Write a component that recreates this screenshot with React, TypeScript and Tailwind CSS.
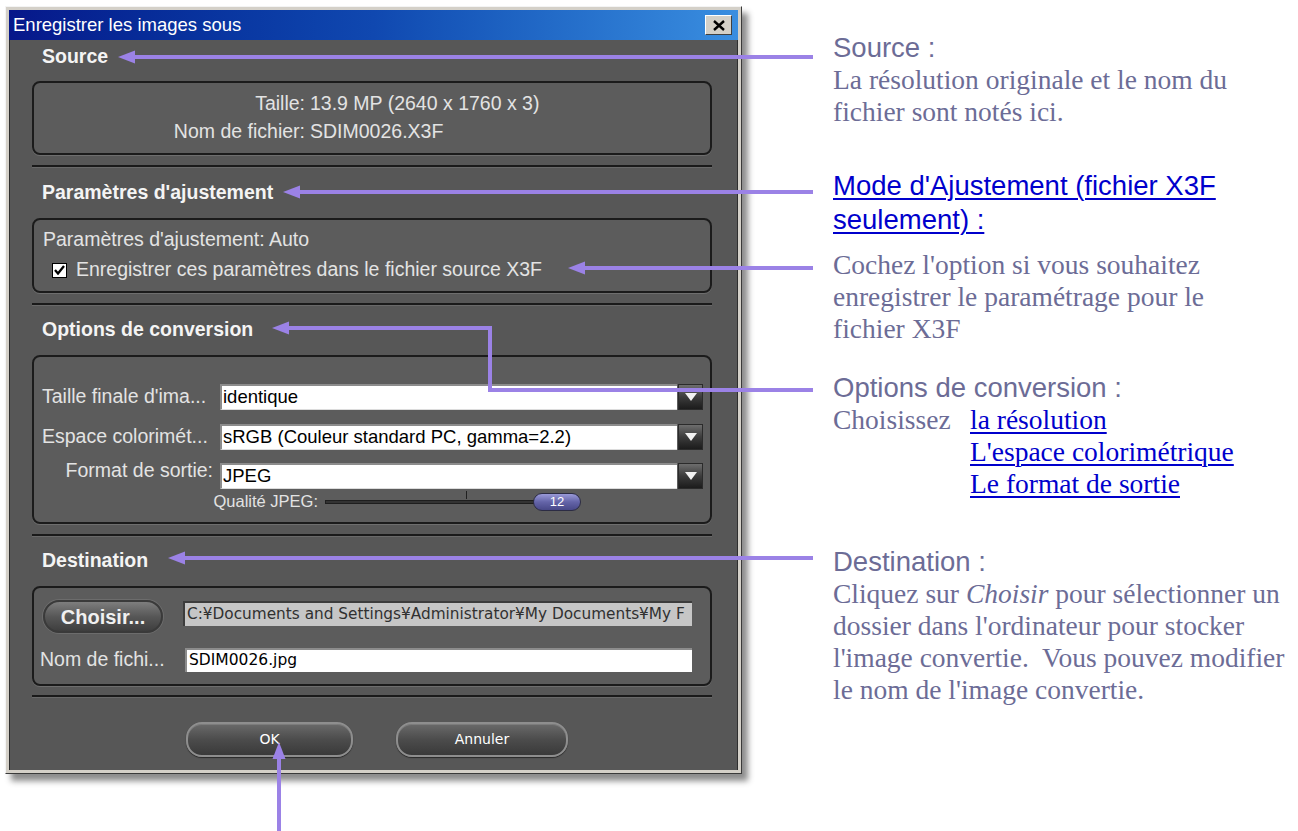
import React from 'react';

const PURPLE = '#9b82e6';

const Header = ({ children, className = '' }: { children: React.ReactNode; className?: string }) => (
    <div className={`flex h-[26px] items-center pl-[10px] text-[19.5px] font-bold text-[#f4f4f4] ${className}`}>
        {children}
    </div>
);

const Box = ({ children, className = '' }: { children: React.ReactNode; className?: string }) => (
    <div className={`rounded-[8px] border-2 border-[#1b1b1b] bg-[#5c5c5c] shadow-[0_1px_0_#6e6e6e] ${className}`}>
        {children}
    </div>
);

const Separator = ({ className = '' }: { className?: string }) => (
    <div className={`h-[3px] border-t-2 border-b border-t-[#1a1a1a] border-b-[#696969] ${className}`} />
);

const Select = ({ value }: { value: string }) => (
    <div className="flex h-[26px] flex-1">
        <div className="flex-1 border-t-2 border-l-2 border-b border-t-[#8c8c8c] border-l-[#8c8c8c] border-b-[#dcdcdc] bg-white pl-[1px] text-[18.5px] leading-[22px] text-black">
            {value}
        </div>
        <div className="ml-px flex w-[25px] items-center justify-center border border-[#2b2b2b] bg-linear-to-b from-[#6e6e6e] via-[#3c3c3c] to-[#1c1c1c]">
            <svg width="12" height="8" viewBox="0 0 12 8">
                <path d="M0 0H12L6 8Z" fill="#f2f2f2" />
            </svg>
        </div>
    </div>
);

const PillButton = ({ label, width }: { label: string; width: string }) => (
    <div className={`flex h-[35px] ${width} items-center justify-center rounded-[16px] border-2 border-[#8e8e8e] bg-linear-to-b from-[#6a6a6a] via-[#4c4c4c] to-[#3a3a3a] shadow-[inset_0_1px_0_#7c7c7c,0_1px_1px_#2a2a2a] font-['DejaVu_Sans',sans-serif] text-[14px] text-white`}>
        {label}
    </div>
);

const SaveDialog = () => (
    <div className="mt-[6px] ml-[5px] w-[737px] border border-t-[#f4f4f4] border-l-[#f4f4f4] border-r-[#3a3a3a] border-b-[#3a3a3a] bg-[#d4d0c8] p-[3px] shadow-[6px_7px_6px_rgba(0,0,0,0.45)] font-['Liberation_Sans',Arial,sans-serif]">
        {/* title bar */}
        <div className="flex h-[30px] items-center justify-between bg-linear-to-r from-[#07178a] via-[#1048b0] to-[#3a8ee0] pl-[4px] pr-[6px]">
            <span className="text-[18.5px] text-white">Enregistrer les images sous</span>
            <div className="flex h-[20px] w-[27px] items-center justify-center border border-t-white border-l-white border-r-[#404040] border-b-[#404040] bg-[#d4d0c8]">
                <svg width="12" height="11" viewBox="0 0 12 11">
                    <path d="M1 1L11 10M11 1L1 10" stroke="#000" strokeWidth="2.4" />
                </svg>
            </div>
        </div>

        <div className="border-l border-r border-l-[#2e2e2e] border-r-[#2e2e2e] bg-[#575757] pt-[4px] pr-[25px] pb-[13px] pl-[22px] text-[19.5px] text-[#e3e3e3]">
            <Header>Source</Header>
            <Box className="mt-[11px] h-[74px] pt-[9px]">
                <div className="grid grid-cols-[271px_1fr] gap-y-[6px] leading-[22px]">
                    <span className="text-right">Taille:</span>
                    <span className="pl-[5px]">13.9 MP (2640 x 1760 x 3)</span>
                    <span className="text-right">Nom de fichier:</span>
                    <span className="pl-[5px]">SDIM0026.X3F</span>
                </div>
            </Box>
            <Separator className="mt-[10px]" />

            <Header className="mt-[12px]">Paramètres d'ajustement</Header>
            <Box className="mt-[12px] h-[75px] pt-[8px]">
                <div className="pl-[9px] leading-[22px]">Paramètres d'ajustement: Auto</div>
                <div className="mt-[9px] flex h-[22px] items-center gap-[9px] pl-[18px]">
                    <div className="flex h-[15px] w-[15px] items-center justify-center border border-black bg-white">
                        <svg width="11" height="10" viewBox="0 0 11 10">
                            <path d="M1 5L4 8.5L10 1" stroke="#000" strokeWidth="2.3" fill="none" />
                        </svg>
                    </div>
                    <span>Enregistrer ces paramètres dans le fichier source X3F</span>
                </div>
            </Box>
            <Separator className="mt-[10px]" />

            <Header className="mt-[11px]">Options de conversion</Header>
            <Box className="mt-[12px] h-[169px] pt-[25px] pr-[7px] pl-[8px]">
                <div className="flex flex-col gap-[11px]">
                    <div className="flex items-center gap-[7px]">
                        <span className="w-[171px] whitespace-nowrap">Taille finale d'ima...</span>
                        <Select value="identique" />
                    </div>
                    <div className="flex items-center gap-[7px]">
                        <span className="w-[171px] whitespace-nowrap">Espace colorimét...</span>
                        <Select value="sRGB (Couleur standard PC, gamma=2.2)" />
                    </div>
                    <div className="flex items-start gap-[7px]">
                        <span className="-mt-[6px] w-[171px] text-right leading-[26px]">Format de sortie:</span>
                        <Select value="JPEG" />
                    </div>
                </div>
                <div className="mt-[4px] flex h-[18px] items-center">
                    <span className="w-[276px] text-right text-[16.5px]">Qualité JPEG:</span>
                    {/* quality slider */}
                    <div className="relative ml-[7px] h-[18px] w-[256px]">
                        <div className="absolute top-[7px] left-0 h-[4px] w-[232px] border border-[#1e1e1e] bg-[#333]" />
                        <div className="absolute top-[-2px] left-[141px] h-[8px] w-px bg-[#202020]" />
                        <div className="absolute top-0 left-[208px] flex h-[18px] w-[48px] items-center justify-center rounded-full border border-[#2c2c44] bg-linear-to-b from-[#9a9ad8] via-[#6464a8] to-[#484888] text-[13px] text-white">
                            12
                        </div>
                    </div>
                </div>
            </Box>
            <Separator className="mt-[10px]" />

            <Header className="mt-[11px]">Destination</Header>
            <Box className="mt-[12px] h-[100px] pt-[12px] pr-[18px]">
                <div className="flex items-start gap-[20px] pl-[9px]">
                    <div className="flex h-[33px] w-[120px] items-center justify-center rounded-full border-2 border-[#3a3a3a] bg-linear-to-b from-[#7e7e7e] via-[#575757] to-[#3e3e3e] shadow-[0_0_0_1px_#6c6c6c] text-[20px] font-bold text-[#f0f0f0]">
                        Choisir...
                    </div>
                    <div className="mt-[1px] h-[25px] flex-1 overflow-hidden whitespace-nowrap border-t-2 border-l-2 border-t-[#3c3c3c] border-l-[#3c3c3c] bg-[#c6c6c6] pl-[2px] font-['DejaVu_Sans',sans-serif] text-[15.3px] leading-[22px] text-[#303030]">
                        C:¥Documents and Settings¥Administrator¥My Documents¥My F
                    </div>
                </div>
                <div className="mt-[12px] flex items-center pl-[6px]">
                    <span className="w-[145px] whitespace-nowrap">Nom de fichi...</span>
                    <div className="h-[24px] flex-1 border-t-2 border-l-2 border-t-[#8c8c8c] border-l-[#8c8c8c] bg-white pl-[2px] font-['DejaVu_Sans',sans-serif] text-[15.5px] leading-[21px] text-black">
                        SDIM0026.jpg
                    </div>
                </div>
            </Box>
            <Separator className="mt-[9px]" />

            <div className="mt-[24px] flex gap-[43px] pl-[154px]">
                <PillButton label="OK" width="w-[167px]" />
                <PillButton label="Annuler" width="w-[172px]" />
            </div>
        </div>
    </div>
);

const Notes = () => (
    <div className="ml-[91px] w-[465px] pt-[32px] text-[27.5px] leading-[32px] text-[#6c6c96]">
        <p className="font-['Liberation_Sans',Arial,sans-serif]">Source :</p>
        <p className="font-['Liberation_Serif','Times_New_Roman',serif]">
            La résolution originale et le nom du
            <br />
            fichier sont notés ici.
        </p>

        <p className="mt-[41px] font-['Liberation_Sans',Arial,sans-serif] leading-[34px] text-[#0000cc] underline decoration-[2px] underline-offset-[3px]">
            Mode d'Ajustement (fichier X3F
            <br />
            seulement) :
        </p>

        <p className="mt-[12px] font-['Liberation_Serif','Times_New_Roman',serif]">
            Cochez l'option si vous souhaitez
            <br />
            enregistrer le paramétrage pour le
            <br />
            fichier X3F
        </p>

        <p className="mt-[27px] font-['Liberation_Sans',Arial,sans-serif]">Options de conversion :</p>
        <div className="flex font-['Liberation_Serif','Times_New_Roman',serif]">
            <span className="w-[137px]">Choisissez</span>
            <div className="flex flex-col text-[#0000cc] underline decoration-[2px] underline-offset-[3px]">
                <span>la résolution</span>
                <span>L'espace colorimétrique</span>
                <span>Le format de sortie</span>
            </div>
        </div>

        <p className="mt-[46px] font-['Liberation_Sans',Arial,sans-serif]">Destination :</p>
        <p className="font-['Liberation_Serif','Times_New_Roman',serif]">
            Cliquez sur <i>Choisir</i> pour sélectionner un
            <br />
            dossier dans l'ordinateur pour stocker
            <br />
            l'image convertie.&nbsp; Vous pouvez modifier
            <br />
            le nom de l'image convertie.
        </p>
    </div>
);

// callout lines drawn over the dialog and the notes
const Callouts = () => (
    <svg className="pointer-events-none absolute inset-0" width="1298" height="831" viewBox="0 0 1298 831">
        <g stroke={PURPLE} strokeWidth="4" fill="none">
            <path d="M132 57H813" />
            <path d="M297 192H813" />
            <path d="M582 268H813" />
            <path d="M286 328H490V390H813" />
            <path d="M182 558H813" />
            <path d="M279 756V831" />
        </g>
        <g fill={PURPLE}>
            <path d="M118 57L135 50.5L135 63.5Z" />
            <path d="M283 192L300 185.5L300 198.5Z" />
            <path d="M568 268L585 261.5L585 274.5Z" />
            <path d="M272 328L289 321.5L289 334.5Z" />
            <path d="M168 558L185 551.5L185 564.5Z" />
            <path d="M279 742L272.5 759L285.5 759Z" />
        </g>
    </svg>
);

export default function App() {
    return (
        <div className="relative flex h-[831px] w-[1298px] items-start overflow-hidden bg-white">
            <SaveDialog />
            <Notes />
            <Callouts />
        </div>
    );
}
